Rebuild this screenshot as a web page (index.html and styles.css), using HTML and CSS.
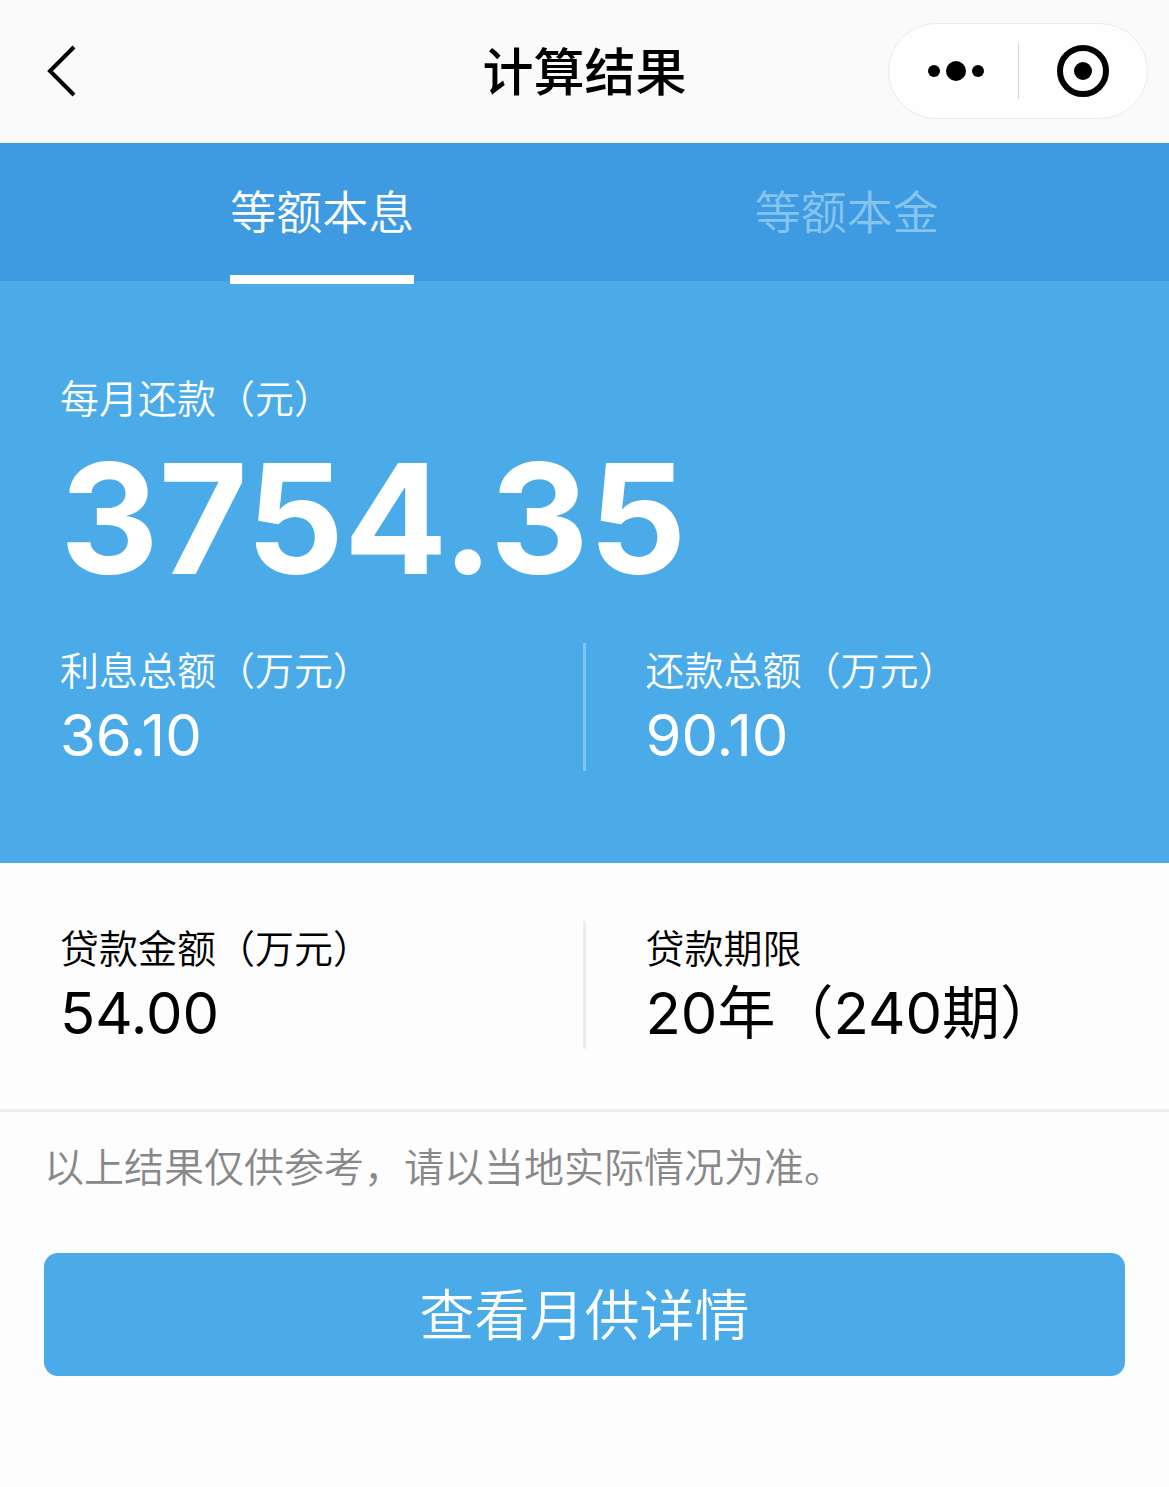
FILE: index.html
```html
<!DOCTYPE html>
<html lang="zh-CN">
<head>
<meta charset="utf-8">
<meta name="viewport" content="width=device-width, initial-scale=1">
<title>计算结果</title>
<link rel="stylesheet" href="styles.css">
</head>
<body>
<header class="navbar">
  <a class="back" href="#" aria-label="返回">
    <svg width="32" height="56" viewBox="0 0 32 56" fill="none" stroke="#000" stroke-width="4"><path d="M28 4 4 28 28 52"/></svg>
  </a>
  <h1 class="title">计算结果</h1>
  <div class="capsule">
    <button class="capsule-btn" type="button" aria-label="更多">
      <svg width="60" height="24" viewBox="0 0 60 24"><circle cx="8" cy="12" r="6"/><circle cx="30" cy="12" r="10"/><circle cx="52" cy="12" r="6"/></svg>
    </button>
    <span class="capsule-line"></span>
    <button class="capsule-btn" type="button" aria-label="关闭">
      <svg width="52" height="52" viewBox="0 0 52 52"><circle cx="26" cy="26" r="23" fill="none" stroke="#000" stroke-width="6"/><circle cx="26" cy="26" r="9"/></svg>
    </button>
  </div>
</header>
<main>
  <nav class="tabs">
    <a class="tab active" href="#">等额本息</a>
    <a class="tab" href="#">等额本金</a>
  </nav>
  <section class="summary">
    <p class="label">每月还款（元）</p>
    <p class="monthly">3754.35</p>
    <div class="pair">
      <div class="cell"><p class="label">利息总额（万元）</p><p class="value">36.10</p></div>
      <div class="cell"><p class="label">还款总额（万元）</p><p class="value">90.10</p></div>
    </div>
  </section>
  <section class="loan">
    <div class="pair">
      <div class="cell"><p class="label">贷款金额（万元）</p><p class="value">54.00</p></div>
      <div class="cell"><p class="label">贷款期限</p><p class="value">20年（240期）</p></div>
    </div>
  </section>
  <p class="note">以上结果仅供参考，请以当地实际情况为准。</p>
  <div class="actions"><button class="primary" type="button">查看月供详情</button></div>
</main>
</body>
</html>
```

FILE: styles.css
```css
* {
  box-sizing: border-box;
}

body {
  margin: 0;
  background: #fdfdfd;
  color: #000;
  font-family: Inter, "Noto Sans CJK SC", sans-serif;
}

h1, p {
  margin: 0;
}

a {
  color: inherit;
  text-decoration: none;
}

button {
  border: 0;
  padding: 0;
  background: none;
  font: inherit;
}

svg {
  display: block;
}

.navbar {
  display: grid;
  grid-template-columns: 1fr auto 1fr;
  align-items: center;
  height: 143px;
  padding: 0 21px 2px;
  background: #fafafa;
}

.back {
  justify-self: start;
  padding-left: 25px;
}

.title {
  padding-top: 4px;
  font-size: 51px;
  font-weight: 500;
  line-height: 72px;
}

.capsule {
  display: grid;
  grid-template-columns: 1fr 1px 1fr;
  align-items: center;
  justify-self: end;
  width: 260px;
  height: 96px;
  border: 1px solid #ebebeb;
  border-radius: 48px;
  background: #fefefe;
}

.capsule-btn {
  display: grid;
  place-items: center;
}

.capsule-btn:first-child {
  padding-left: 6px;
}

.capsule-line {
  height: 56px;
  background: #d4d4d4;
}

.tabs {
  display: flex;
  justify-content: space-around;
  height: 138px;
  padding: 0 60px;
  background: #3e9be1;
  color: #86c4f0;
}

.tab {
  height: 141px;
  font-size: 46px;
  font-weight: 350;
  line-height: 138px;
}

.tab.active {
  border-bottom: 9px solid #fff;
  color: #fff;
}

.summary {
  padding: 90px 64px 92px 60px;
  background: #4aabe8;
  color: #fff;
}

.label {
  font-size: 39px;
  font-weight: 350;
  line-height: 56px;
}

.monthly {
  margin-bottom: 32px;
  font-size: 153px;
  font-weight: 700;
  line-height: 184px;
}

.pair {
  display: grid;
  grid-template-columns: 1fr 1fr;
}

.cell + .cell {
  padding-left: 60px;
  border-left: 3px solid #82c6ef;
}

.value {
  font-size: 58px;
  line-height: 72px;
}

.loan {
  padding: 58px 64px 60px 60px;
  border-bottom: 3px solid #efefef;
}

.loan .cell + .cell {
  border-color: #ededed;
}

.note {
  padding: 28px 44px;
  color: #888;
  font-size: 40px;
  font-weight: 350;
  line-height: 56px;
}

.actions {
  padding: 29px 44px;
}

.primary {
  width: 100%;
  height: 123px;
  border-radius: 14px;
  background: #4aabe8;
  color: #fff;
  font-size: 55px;
  font-weight: 350;
  line-height: 80px;
}
```
